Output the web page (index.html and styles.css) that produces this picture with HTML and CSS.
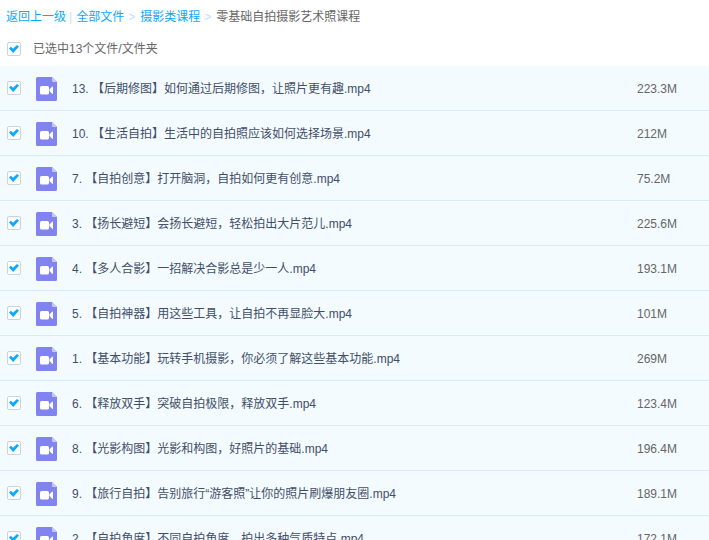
FILE: index.html
```html
<!DOCTYPE html>
<html lang="zh-cn">
  <head>
    <meta charset="UTF-8" />
    <meta name="viewport" content="width=device-width, initial-scale=1.0" />
    <title>零基础自拍摄影艺术照课程</title>
    <link rel="stylesheet" href="styles.css">
  </head>

  <body>
    <svg class="sprite" aria-hidden="true">
      <symbol id="video" viewBox="0 0 21 24">
        <path fill="#8183f1" d="M1.500 0h14.500l5 5v17.500a1.500 1.500 0 0 1-1.500 1.500H1.500a1.500 1.500 0 0 1-1.500-1.500V1.500a1.500 1.500 0 0 1 1.500-1.500z" />
        <path fill="#c6c8fb" d="M16 0l5 5h-4a1 1 0 0 1-1-1z" />
        <rect fill="#fff" x="4" y="9" width="9" height="8.500" rx="1.500" />
        <path fill="#fff" d="M13.500 12.300l2.600-2.600q.9-.6.900.5v6q0 1.100-.9.500l-2.600-2.600z" />
      </symbol>
    </svg>

    <nav class="crumbs">
      <a href="#">返回上一级</a>
      <span class="bar">|</span>
      <a href="#">全部文件</a>
      <span class="arrow">&gt;</span>
      <a href="#">摄影类课程</a>
      <span class="arrow">&gt;</span>
      <span>零基础自拍摄影艺术照课程</span>
    </nav>

    <div class="selected">
      <input type="checkbox" id="all" checked />
      <label for="all">已选中13个文件/文件夹</label>
    </div>

    <div class="list">
      <table>
        <colgroup>
          <col class="col-check" />
          <col class="col-icon" />
          <col />
          <col class="col-size" />
        </colgroup>
        <tbody>
          <tr>
            <td><input type="checkbox" id="f1" checked /></td>
            <td><svg class="icon"><use href="#video" /></svg></td>
            <td class="name"><label for="f1">13. 【后期修图】如何通过后期修图，让照片更有趣.mp4</label></td>
            <td class="size">223.3M</td>
          </tr>
          <tr>
            <td><input type="checkbox" id="f2" checked /></td>
            <td><svg class="icon"><use href="#video" /></svg></td>
            <td class="name"><label for="f2">10. 【生活自拍】生活中的自拍照应该如何选择场景.mp4</label></td>
            <td class="size">212M</td>
          </tr>
          <tr>
            <td><input type="checkbox" id="f3" checked /></td>
            <td><svg class="icon"><use href="#video" /></svg></td>
            <td class="name"><label for="f3">7. 【自拍创意】打开脑洞，自拍如何更有创意.mp4</label></td>
            <td class="size">75.2M</td>
          </tr>
          <tr>
            <td><input type="checkbox" id="f4" checked /></td>
            <td><svg class="icon"><use href="#video" /></svg></td>
            <td class="name"><label for="f4">3. 【扬长避短】会扬长避短，轻松拍出大片范儿.mp4</label></td>
            <td class="size">225.6M</td>
          </tr>
          <tr>
            <td><input type="checkbox" id="f5" checked /></td>
            <td><svg class="icon"><use href="#video" /></svg></td>
            <td class="name"><label for="f5">4. 【多人合影】一招解决合影总是少一人.mp4</label></td>
            <td class="size">193.1M</td>
          </tr>
          <tr>
            <td><input type="checkbox" id="f6" checked /></td>
            <td><svg class="icon"><use href="#video" /></svg></td>
            <td class="name"><label for="f6">5. 【自拍神器】用这些工具，让自拍不再显脸大.mp4</label></td>
            <td class="size">101M</td>
          </tr>
          <tr>
            <td><input type="checkbox" id="f7" checked /></td>
            <td><svg class="icon"><use href="#video" /></svg></td>
            <td class="name"><label for="f7">1. 【基本功能】玩转手机摄影，你必须了解这些基本功能.mp4</label></td>
            <td class="size">269M</td>
          </tr>
          <tr>
            <td><input type="checkbox" id="f8" checked /></td>
            <td><svg class="icon"><use href="#video" /></svg></td>
            <td class="name"><label for="f8">6. 【释放双手】突破自拍极限，释放双手.mp4</label></td>
            <td class="size">123.4M</td>
          </tr>
          <tr>
            <td><input type="checkbox" id="f9" checked /></td>
            <td><svg class="icon"><use href="#video" /></svg></td>
            <td class="name"><label for="f9">8. 【光影构图】光影和构图，好照片的基础.mp4</label></td>
            <td class="size">196.4M</td>
          </tr>
          <tr>
            <td><input type="checkbox" id="f10" checked /></td>
            <td><svg class="icon"><use href="#video" /></svg></td>
            <td class="name"><label for="f10">9. 【旅行自拍】告别旅行“游客照”让你的照片刷爆朋友圈.mp4</label></td>
            <td class="size">189.1M</td>
          </tr>
          <tr>
            <td><input type="checkbox" id="f11" checked /></td>
            <td><svg class="icon"><use href="#video" /></svg></td>
            <td class="name"><label for="f11">2. 【自拍角度】不同自拍角度，拍出多种气质特点.mp4</label></td>
            <td class="size">172.1M</td>
          </tr>
        </tbody>
      </table>
    </div>
  </body>
</html>
```

FILE: styles.css
```css
body {
  display: flex;
  flex-direction: column;
  height: 100vh;
  margin: 0;
  background-color: #fff;
  color: #666;
  font-family: "Liberation Sans", "Noto Sans CJK SC", sans-serif;
  font-size: 12px;
  line-height: 18px;
}

a {
  color: #09aaff;
  text-decoration: none;
}

.sprite {
  position: absolute;
  width: 0;
  height: 0;
}

.crumbs {
  display: flex;
  padding: 8px 6px 6px;
}
.bar {
  margin: 0 4px 0 3px;
  color: #c4dbfe;
}
.arrow {
  margin: 0 5px 0 4px;
  color: #c4dbfe;
}

.selected {
  display: flex;
  align-items: center;
  gap: 12px;
  height: 34px;
  padding-left: 7px;
}

.list {
  flex: 1;
  min-height: 0;
  overflow: hidden;
}

table {
  width: 100%;
  table-layout: fixed;
  border-collapse: separate;
  border-spacing: 0;
  background-color: #f4fbff;
  color: #424e67;
}
td {
  box-sizing: border-box;
  height: 45px;
  padding: 0;
  border-bottom: 1px solid #d7ebfd;
  white-space: nowrap;
}
td:first-child {
  padding-left: 7px;
}
.col-check,
.col-icon {
  width: 36px;
}
.col-size {
  width: 72px;
}
.name,
.size {
  padding-top: 2px;
}
.size {
  color: #666;
}

.icon {
  display: block;
  width: 21px;
  height: 24px;
  margin-top: 2px;
}

input {
  appearance: none;
  display: grid;
  place-content: center;
  box-sizing: border-box;
  width: 14px;
  height: 14px;
  margin: 0;
  border: 1px solid #c8d4e0;
  border-radius: 2px;
  background-color: #fff;
}
input:checked::before {
  content: "";
  width: 10px;
  height: 8px;
  background-color: #09aaff;
  clip-path: polygon(0 45%, 18% 22%, 40% 46%, 80% 0, 100% 20%, 42% 100%);
}
```
